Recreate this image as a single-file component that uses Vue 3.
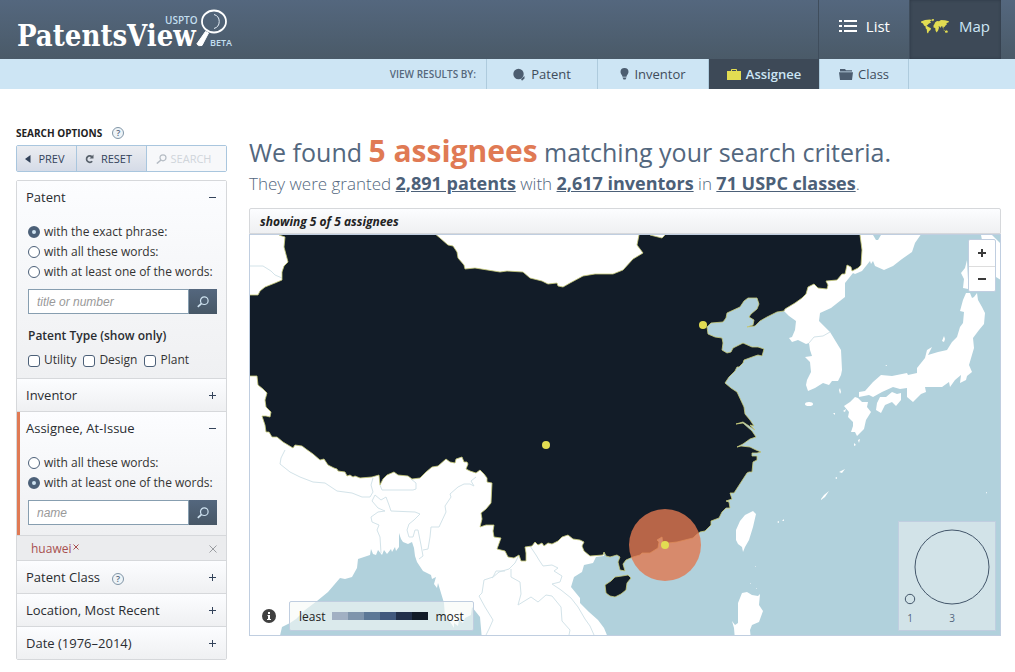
<script setup>
import { ref } from 'vue'

const tabs = [
  { id: 'patent', label: 'Patent' },
  { id: 'inventor', label: 'Inventor' },
  { id: 'assignee', label: 'Assignee' },
  { id: 'class', label: 'Class' }
]
const activeTab = ref('assignee')
const patentMatch = ref('exact')
const assigneeMatch = ref('any')
const patentTypes = ['Utility', 'Design', 'Plant']
const closedSections = [
  { label: 'Patent Class', help: true },
  { label: 'Location, Most Recent', help: false },
  { label: 'Date (1976–2014)', help: false }
]
const shades = ['s1', 's2', 's3', 's4', 's5', 's6']
</script>

<template>
  <div class="page">
    <header class="top">
      <a href="#" class="logo" aria-label="PatentsView">
        <span class="logo-name">PatentsView</span>
        <span class="logo-uspto">USPTO</span>
        <svg class="logo-glass" viewBox="0 0 32 38" aria-hidden="true">
          <ellipse cx="18" cy="12.5" rx="12" ry="11" fill="none" stroke="#fff" stroke-width="1.8" />
          <path d="M18 5.500a7.300 7.300 0 0 1 0 14" fill="none" stroke="#e4edf5" stroke-width="1" />
          <path d="M9.500 22.500 12.500 24 6 36.500Q2 37.500.8 35Z" fill="#fff" stroke="#fff" stroke-width="1" />
        </svg>
        <span class="logo-beta">BETA</span>
      </a>
      <nav class="modes">
        <a href="#" class="mode">
          <svg width="18" height="14" viewBox="0 0 18 14" aria-hidden="true">
            <path d="M0 1h3v2H0zM0 6h3v2H0zM0 11h3v2H0zM5 1h13v2H5zM5 6h13v2H5zM5 11h13v2H5z" fill="#fff" />
          </svg>
          List
        </a>
        <a href="#" class="mode mode-on">
          <svg width="28" height="15" viewBox="0 0 28 15" fill="#e2dc52" aria-hidden="true">
            <path d="M0 2.500 4 1l5-.6 2 .8-2 1.300 1 1.200-2 .8L6.500 6l-1 .8 2 1.200 2.500 1.200-.5 1.800-1.600 1.200L7 14.500l-1-1-.2-3L4.500 9l.3-1.200L3 6.500 2 4.500 0 3.500Z" />
            <path d="M10.500.300 13 0l-.5 2-1 .3Z" />
            <path d="M13.500 5 14 3.500 16 2l2 .3L20 1l4 .2 4 1-.6 1.300-1.900.5.3 1.500-1.300 1-1 1.500-1-.3.2 2-1-1-.4-1.500-1.300.3-.5 1.500-.9-1.500-1.100-.2.5 1.500-1 3-1.500 1.700-1-2-.3-2.500-1.700-.5L12.500 6.500Z" />
            <path d="m22.500 10.500 1.500 1-1 .3ZM24 12l2-.8 1 1.800-1 .8-2-.4Z" />
          </svg>
          Map
        </a>
      </nav>
    </header>

    <nav class="tabs">
      <span class="tabs-label">VIEW RESULTS BY:</span>
      <a
        v-for="t in tabs"
        :key="t.id"
        href="#"
        class="tab"
        :class="[`tab-${t.id}`, { on: activeTab === t.id }]"
        @click.prevent="activeTab = t.id"
      >
        <svg v-if="t.id === 'patent'" width="13" height="13" viewBox="0 0 13 13" aria-hidden="true">
          <circle cx="5.500" cy="6" r="5.200" fill="#4c5d70" />
          <path d="m8 11 3.500-3v2.500L9 12.800Z" fill="#4c5d70" />
        </svg>
        <svg v-else-if="t.id === 'inventor'" width="9" height="12" viewBox="0 0 9 12" fill="#4c5d70" aria-hidden="true">
          <path d="M4.500 0a4 4 0 0 1 4 4c0 2-1.800 2.800-2 4.800h-4C2.300 6.800.5 6 .5 4a4 4 0 0 1 4-4ZM2.500 9.500h4L5.500 11.500h-2Z" />
        </svg>
        <svg v-else-if="t.id === 'assignee'" width="14" height="11" viewBox="0 0 14 11" aria-hidden="true">
          <path d="M0 2h4V.500Q4 0 5 0h4q1 0 1 .5V2h4v9H0ZM5 2h4V1H5Z" fill="#e2dc52" />
        </svg>
        <svg v-else width="14" height="11" viewBox="0 0 14 11" fill="#4c5d70" aria-hidden="true">
          <path d="M1 0h5l1 1.200h6V2.500H1ZM0 3.200h14L13 11H1Z" />
        </svg>
        {{ t.label }}
      </a>
    </nav>

    <div class="body">
      <aside class="side">
        <h2 class="side-title">SEARCH OPTIONS <button class="help" aria-label="Search help">?</button></h2>
        <div class="actions">
          <button class="action prev">
            <svg width="6" height="8" viewBox="0 0 6 8" aria-hidden="true"><path d="M5.500 0v8L0 4Z" fill="#33435a" /></svg>
            PREV
          </button>
          <button class="action reset">
            <svg width="9" height="10" viewBox="0 0 9 10" aria-hidden="true">
              <path d="M7 2.800A3.200 3.200 0 1 0 7.200 7.200" fill="none" stroke="#58616b" stroke-width="1.700" />
              <path d="M8.500.500v4h-4Z" fill="#58616b" />
            </svg>
            RESET
          </button>
          <button class="action search" disabled>
            <svg width="11" height="10" viewBox="0 0 11 10" fill="none" stroke="#b5bcc4" stroke-width="1.200" aria-hidden="true">
              <circle cx="7" cy="3.800" r="3" /><path d="M5 6 .8 9.500" stroke-width="1.600" />
            </svg>
            SEARCH
          </button>
        </div>

        <div class="panel">
          <section class="block">
            <button class="head" aria-expanded="true">Patent <i class="minus"></i></button>
            <div class="fields">
              <label class="row"><input v-model="patentMatch" type="radio" name="pm" value="exact" />with the exact phrase:</label>
              <label class="row"><input v-model="patentMatch" type="radio" name="pm" value="all" />with all these words:</label>
              <label class="row"><input v-model="patentMatch" type="radio" name="pm" value="any" />with at least one of the words:</label>
              <form class="find" @submit.prevent>
                <input type="text" placeholder="title or number" aria-label="Patent title or number" />
                <button aria-label="Add patent term">
                  <svg width="12" height="12" viewBox="0 0 12 12" fill="none" stroke="#cfe3f1" stroke-width="1.200" aria-hidden="true">
                    <circle cx="7.300" cy="4.700" r="3.800" /><path d="M4.600 7.400.8 10.800" stroke-width="1.700" />
                  </svg>
                </button>
              </form>
              <fieldset class="types">
                <legend>Patent Type (show only)</legend>
                <div class="checks">
                  <label v-for="p in patentTypes" :key="p"><input type="checkbox" />{{ p }}</label>
                </div>
              </fieldset>
            </div>
          </section>

          <section class="block">
            <button class="head" aria-expanded="false">Inventor <i class="plus"></i></button>
          </section>

          <section class="block current">
            <button class="head" aria-expanded="true">Assignee, At-Issue <i class="minus"></i></button>
            <div class="fields">
              <label class="row"><input v-model="assigneeMatch" type="radio" name="am" value="all" />with all these words:</label>
              <label class="row"><input v-model="assigneeMatch" type="radio" name="am" value="any" />with at least one of the words:</label>
              <form class="find" @submit.prevent>
                <input type="text" placeholder="name" aria-label="Assignee name" />
                <button aria-label="Add assignee term">
                  <svg width="12" height="12" viewBox="0 0 12 12" fill="none" stroke="#cfe3f1" stroke-width="1.200" aria-hidden="true">
                    <circle cx="7.300" cy="4.700" r="3.800" /><path d="M4.600 7.400.8 10.800" stroke-width="1.700" />
                  </svg>
                </button>
              </form>
            </div>
          </section>

          <div class="terms">
            <button class="term">
              huawei<svg width="6" height="6" viewBox="0 0 6 6" aria-hidden="true"><path d="m.5.500 5 5m0-5-5 5" stroke="#a8504f" /></svg>
            </button>
            <button class="clear" aria-label="Clear all terms">
              <svg width="8" height="8" viewBox="0 0 8 8" aria-hidden="true"><path d="m.5.500 7 7m0-7-7 7" stroke="#9a9da1" /></svg>
            </button>
          </div>

          <section v-for="s in closedSections" :key="s.label" class="block">
            <button class="head" aria-expanded="false">
              <span>{{ s.label }}<span v-if="s.help" class="help">?</span></span> <i class="plus"></i>
            </button>
          </section>
        </div>
      </aside>

      <main class="main">
        <h1>We found <strong>5 assignees</strong> matching your search criteria.</h1>
        <p class="sub">
          They were granted <a href="#">2,891 patents</a> with <a href="#">2,617 inventors</a> in
          <a href="#">71 USPC classes</a>.
        </p>
        <div class="showing">showing 5 of 5 assignees</div>
        <div class="map">
          <svg class="geo" viewBox="250 235 750 400" preserveAspectRatio="xMidYMid slice" role="img" aria-label="Map of assignee locations">
            <g fill="#fff">
              <path d="M240 225H700V290L600 540 604 556 596 557 593 563 584 565 582 572 574 577 571 587 580 598 580 603 589 612 598 620 604 628 609 640H482L480 617 472 607 471 615 465 618 463 623 459 620 458 626 454 623 454 628 449 620 445 618 444 603 438 583 437 588 434 584 436 577 432 579 431 575 427 573 423 571 417 562 415 556 414 548 412 542 408 544 403 542 401 539 399 533 399 547 396 551 395 547 392 552 391 549 387 554 384 550 382 555 378 550 376 555 373 554 371 549 370 555 358 559 357 568 352 577 345 579 340 578 334 585 328 592 317 601 305 610 296 619 290 623 282 627 279 640H240Z" />
              <path d="M784 311 789 316 796 321 795 330 792 337 789 338 792 342 798 340 806 344 809 343 810 350 812 356 805 357 810 362 811 372 807 380 806 385 808 391 815 388 823 383 829 385 832 381 838 381 841 375 842 370 841 350 830 332 819 321 820 313 831 308 845 297 845 283 853 273 855 274 862 271 870 261 871 264 873 261 875 266 884 270 893 266 902 259 912 252 915 243 924 230H850L845 250 800 290Z" />
              <path d="M966 293 970 293 972 298 974 297 977 293 978 300 982 307 985 313 984 324 979 330 973 338 974 348 969 365 972 372 967 376 966 380 960 383 961 375 955 380 950 387 949 382 942 387 925 387 926 392 921 394 913 402 907 397 907 388 900 389 893 387 882 392 873 397 869 395 859 397 859 392 865 391 873 382 881 375 892 376 907 373 908 375 917 373 917 368 925 358 927 350 932 347 928 355 938 352 947 350 952 342 957 337 960 327 963 323 964 312 960 311 963 300Z" />
              <path d="M967 260 965 268 961 273 964 279 963 288 968 289 975 280H968ZM981 235H992L1001 244V280L996 277 992 240H982Z" />
              <path d="M855 397 858 398 862 402 868 402 867 407 871 412 866 420 864 429 857 436 855 432 851 432 853 426 853 422 848 417 849 412 844 406 850 402ZM892 392 897 394 901 393 901 400 896 406 892 402 885 405 881 413 876 410 877 403 880 397 886 397Z" />
              <path d="M753 511 756 514 753 527 749 540 745 547 743 552 742 547 738 544 736 540 736 530 740 521 745 515Z" />
              <path d="M742 593 747 592 752 595 758 596 760 594 759 605 763 611 759 622 752 625 750 630 751 640H735L734 628 732 621 735 625 738 623 738 603Z" />
              <ellipse cx="809" cy="404" rx="4" ry="2" />
              <path d="m944 336 1 3-1 3-2-1ZM840 388l1 4-1 2-1-4ZM843 411l3-2-1 3ZM833 413h2v2ZM854 443l2 2-2 1ZM858 440l2-1-1 4ZM839 472l6-3-3 4ZM835 478l2-1v2ZM821 499l3-4 5-4-4 6-4 3ZM777 522l2-1v2ZM782 521l2-2v2ZM755 566h1v1ZM750 583h1v1ZM756 588h1v1ZM885 365h2v1ZM986 492h1v2Z" />
            </g>
            <path d="M873 235h8l-3 5h-2Z" fill="#b1d1dc" />
            <g class="borders">
              <path d="M250 266H263L271 271 275 275 282 278M285 450 281 458 280 464 290 472 300 477 313 482 325 483 337 491 352 493 362 497 370 497 373 492 371 485 373 478M380 485 382 490H413L416 489 416 483 411 479M375 495 372 501 378 508 385 511 378 512 371 517 372 522 379 525 377 530 380 537 381 553M375 495 381 500 386 497 389 505 391 511 415 512 420 514 414 520 409 524 407 530 409 537 413 537 415 530 418 530 421 545 423 556 419 559M423 550 428 549 430 537 431 527 439 527 446 512 445 506 451 497 450 494 458 487 464 484 470 484 474 486 471 481 476 477M505 571 496 571 493 577 484 580 482 593 479 596 485 607 493 620 489 629 486 635" />
              <path d="M519 555 515 563 509 569 499 572 492 578M511 569 511 577 520 582 521 594 518 605 531 597 538 602 546 595 552 596 561 607 562 621 570 630 569 635M530 546 536 555 539 560 543 566 552 565 558 568 554 571 562 576 560 582 552 584 561 590 571 598 578 607 585 619 590 626 594 635M809 343 814 337 823 336 830 332" />
            </g>
            <g class="china">
              <path d="M279 228V235L285 237 284 247 288 262 284 266 282 272 282 280 275 283 265 287 260 291 258 295H240V376L257 376 258 385 263 389 267 393 265 400 266 407 271 412 270 417 266 416 262 416 265 425 266 432 269 432 272 437 277 437 283 442 288 445 293 448 295 445 302 446 306 449 313 454 320 460 324 459 328 465 334 468 337 469 338 471 345 472 347 476 350 475 353 477 355 476 360 478 372 477 379 475 380 485 383 479 387 475 394 472 398 475 408 476 412 479 420 478 426 472 432 467 438 466 446 459 450 462 455 463 456 459 462 457 464 462 467 462 468 464 466 469 470 471 476 473 480 470 484 474 487 478 487 482 492 483 491 503 486 509 481 513 482 519 480 527 486 525 494 525 493 531 494 537 501 538 497 549 505 551 508 557 514 558 519 555 521 561 526 561 526 553 525 547 532 546 535 542 538 545 542 543 544 546 548 543 552 544 558 541 562 537 568 535 573 539 580 540 584 542 582 546 584 551 590 556 603 555 604 552 606 556 610 557 617 555 620 557 618 562 620 570 625 571 623 564 626 560 633 557 640 555 642 553 650 553 658 548 659 542 657 540 662 537 663 545 668 543 677 542 693 538 696 535 700 532 705 531 711 525 711 521 719 518 722 512 726 508 730 508 729 502 726 501 732 499 730 493 734 493 747 473 749 472 752 472 753 462 757 460 757 456 752 456 752 453 757 453 761 452 756 450 750 447 741 446 737 447 743 444 750 439 756 437 752 431 743 423 736 424 743 422 755 430 750 425 754 426 750 420 745 414 744 407 737 392 731 388 725 383 729 377 735 371 737 367 739 367 743 363 744 360 755 356 758 355 762 356 764 349 758 347 752 347 743 343 733 348 731 352 727 353 722 350 723 343 722 338 715 337 708 334 707 327 711 323 723 322 726 318 727 313 740 307 744 301 748 298 757 298 759 304 757 309 751 314 749 317 754 320 753 325 747 327 755 326 760 321 767 317 777 312 784 311 785 309 795 303 802 298 806 294 808 287 814 284 818 288 827 289 828 285 826 281 837 280 842 274 845 274 847 265 851 267 852 271 858 268 861 265 862 250 860 235V228H668L665 235 662 238 650 235 646 228H639V235L637 245 643 253 633 259 623 270 613 274 595 274 583 276 570 283 563 287 558 286 557 283 548 284 542 281 530 278 523 272 507 271 500 272 475 268 465 269 464 265 458 258 457 252 453 246 448 245 440 238 434 233V228Z" />
              <path d="M615 577 622 576 628 575 631 578 627 583 626 590 621 594 615 597 610 596 606 593 605 585 611 581Z" />
            </g>
            <circle cx="665" cy="545" r="36" fill="#e17850" fill-opacity=".8" />
            <g fill="#e2dc52">
              <circle cx="665" cy="545" r="4" /><circle cx="703" cy="325" r="4" /><circle cx="546" cy="445" r="4" />
            </g>
          </svg>

          <div class="zoom">
            <button aria-label="Zoom in"><svg width="8" height="8" viewBox="0 0 8 8" aria-hidden="true"><path d="M3 0h2v3h3v2H5v3H3V5H0V3h3Z" fill="#3a3a3a" /></svg></button>
            <button aria-label="Zoom out"><svg width="8" height="8" viewBox="0 0 8 8" aria-hidden="true"><path d="M0 3h8v2H0Z" fill="#3a3a3a" /></svg></button>
          </div>

          <div class="scale">
            <button class="info" aria-label="Map information">
              <svg width="14" height="14" viewBox="0 0 14 14" aria-hidden="true">
                <circle cx="7" cy="7" r="7" fill="#404040" />
                <path d="M6 3h2v2H6ZM5.500 6H8v4h1v1H5v-1h1V7h-.5Z" fill="#fff" />
              </svg>
            </button>
            <div class="ramp">
              <span>least</span>
              <div class="shades"><i v-for="s in shades" :key="s" :class="s"></i></div>
              <span>most</span>
            </div>
          </div>

          <div class="sizes">
            <svg width="76" height="76" viewBox="0 0 76 76" class="big" aria-hidden="true"><circle cx="38" cy="38" r="37" /></svg>
            <svg width="12" height="12" viewBox="0 0 12 12" class="small" aria-hidden="true"><circle cx="6" cy="6" r="4.700" /></svg>
            <span class="n1">1</span><span class="n3">3</span>
          </div>
        </div>
      </main>
    </div>
  </div>
</template>

<style>
body {
  background: #fff;
}
</style>

<style scoped>
.page {
  font-family: "Open Sans", sans-serif;
  color: #333;
  font-size: 12px;
}
.page * {
  box-sizing: border-box;
}
a {
  text-decoration: none;
}
button {
  font-family: inherit;
  margin: 0;
  padding: 0;
  border: 0;
  background: none;
  cursor: pointer;
}
.top {
  display: flex;
  justify-content: space-between;
  height: 59px;
  padding: 0 14px 0 17px;
  background: linear-gradient(#54677e, #4a5a68);
}
.logo {
  position: relative;
  width: 220px;
  color: #fff;
}
.logo-name {
  display: block;
  margin-top: 24px;
  font: bold 29px/24px "DejaVu Serif Condensed", "DejaVu Serif", serif;
}
.logo-uspto,
.logo-beta {
  position: absolute;
  color: #c3dff0;
  font-weight: 600;
}
.logo-uspto {
  left: 148px;
  top: 13px;
  font-size: 10px;
  line-height: 14px;
}
.logo-beta {
  left: 193px;
  top: 37px;
  font-size: 9px;
  line-height: 12px;
}
.logo-glass {
  position: absolute;
  left: 179px;
  top: 9px;
  width: 32px;
  height: 38px;
}
.modes {
  display: flex;
}
.mode {
  display: flex;
  align-items: center;
  gap: 9px;
  height: 59px;
  padding: 0 19px 7px 20px;
  border-left: 1px solid #3f4d5c;
  color: #fff;
  font-size: 15px;
}
.mode-on {
  gap: 10px;
  padding: 0 11px 7px;
  background: #3d4957;
  color: #cde6f5;
  box-shadow: inset 0 0 3px #2c3744;
}
.tabs {
  display: flex;
  justify-content: flex-end;
  height: 30px;
  padding-right: 106px;
  background: #cde5f4;
}
.tabs-label {
  margin-right: 10px;
  color: #56687c;
  font-size: 10px;
  font-weight: 600;
  line-height: 30px;
}
.tab {
  display: flex;
  align-items: center;
  justify-content: center;
  gap: 5px;
  width: 111px;
  border-left: 1px solid #aecbdd;
  color: #3f4c5b;
  font-size: 13px;
  font-weight: 500;
}
.tab-class {
  width: 90px;
  border-right: 1px solid #aecbdd;
}
.tab.on {
  background: #3d4957;
  background-clip: padding-box;
  color: #cde6f5;
  font-weight: 600;
}
.body {
  display: flex;
  gap: 22px;
  padding: 36px 14px 12px 16px;
}
.side {
  flex: 0 0 211px;
  min-width: 0;
}
.side-title {
  display: flex;
  align-items: center;
  height: 16px;
  margin: 0;
  font-size: 10px;
  font-weight: 700;
  color: #222;
}
.help {
  display: inline-block;
  width: 12px;
  height: 12px;
  margin-left: 10px;
  border: 1px solid #8195a6;
  border-radius: 50%;
  background: #eef4f8;
  color: #56687c;
  font-size: 9px;
  line-height: 10px;
  font-weight: 600;
  text-align: center;
}
.head .help {
  margin-left: 12px;
}
.actions {
  display: flex;
  height: 27px;
  margin: 4px 0 8px;
  border: 1px solid #a9c6de;
  border-radius: 2px;
}
.action {
  display: flex;
  align-items: center;
  justify-content: center;
  gap: 7px;
  background: linear-gradient(#ebedf1, #d5dbe7);
  color: #33435a;
  font-size: 11px;
}
.prev {
  flex: 0 0 59px;
  padding-right: 3px;
}
.reset {
  flex: 0 0 70px;
  padding-right: 6px;
  border-left: 1px solid #a9c6de;
}
.search {
  flex: 1;
  min-width: 0;
  gap: 4px;
  padding-right: 6px;
  border-left: 1px solid #a9c6de;
  background: #f7f8fa;
  color: #d0d5da;
}
.panel {
  border: 1px solid #d6d8db;
  border-radius: 2px;
}
.block {
  border-bottom: 1px solid #d6d8db;
  background: linear-gradient(#fcfdff, #eff0f2);
}
.block:last-child {
  border-bottom: 0;
}
.current {
  position: relative;
}
.current::before {
  content: "";
  position: absolute;
  left: 0;
  top: 0;
  bottom: 0;
  width: 3px;
  background: #e07a54;
}
.head {
  display: flex;
  align-items: center;
  justify-content: space-between;
  width: 100%;
  height: 32px;
  padding: 0 10px 0 9px;
  color: #2a2d31;
  font-size: 13px;
  font-weight: 500;
}
.minus,
.plus {
  position: relative;
  width: 7px;
  height: 7px;
}
.minus::before,
.plus::before,
.plus::after {
  content: "";
  position: absolute;
  left: 0;
  top: 3px;
  width: 7px;
  height: 1px;
  background: #33435a;
}
.plus::after {
  left: 3px;
  top: 0;
  width: 1px;
  height: 7px;
}
.fields {
  padding: 8px 9px 10px 11px;
}
.row {
  display: flex;
  align-items: center;
  height: 20px;
  white-space: nowrap;
}
input[type="radio"],
input[type="checkbox"] {
  appearance: none;
  flex: none;
  width: 12px;
  height: 12px;
  margin: 2px 4px 0 0;
  border: 1px solid #4c6078;
  background: #fff;
}
input[type="radio"] {
  border-radius: 50%;
}
input[type="radio"]:checked {
  border: 4px solid #4c6078;
  background: #cfe3f1;
}
input[type="checkbox"] {
  border-radius: 3px;
}
.find {
  display: flex;
  height: 25px;
  margin-top: 8px;
}
.find input {
  flex: 1;
  width: 0;
  min-width: 0;
  height: 25px;
  padding: 0 8px;
  border: 1px solid #879eb0;
  background: #fff;
  font: italic 12px "Liberation Sans", sans-serif;
}
.find input::placeholder {
  color: #999;
}
.find button {
  display: flex;
  align-items: center;
  justify-content: center;
  flex: 0 0 28px;
  background: linear-gradient(#54677e, #475766);
}
.types {
  min-width: 0;
  margin: 12px 0 0;
  padding: 0;
  border: 0;
}
.types legend {
  padding: 0;
  color: #2a2d31;
  line-height: 20px;
  font-weight: 600;
}
.checks {
  display: flex;
  gap: 7px;
  margin-top: 5px;
  line-height: 17px;
}
.checks label {
  display: flex;
  align-items: center;
}
.terms {
  display: flex;
  align-items: center;
  justify-content: space-between;
  height: 25px;
  padding: 0 9px 0 14px;
  border-bottom: 1px solid #d6d8db;
  background: #ebecee;
}
.term {
  display: flex;
  gap: 2px;
  color: #a8504f;
  font-size: 12px;
}
.term svg {
  margin-top: 4px;
}
.clear {
  display: flex;
  padding-top: 2px;
}
.main {
  flex: 1;
  min-width: 0;
}
h1 {
  margin: 7px 0 0;
  color: #53677e;
  font-size: 25px;
  font-weight: 400;
  line-height: 38px;
}
h1 strong {
  color: #e07a54;
  font-size: 30px;
  line-height: 38px;
}
.sub {
  margin: 0;
  color: #53677e;
  font-size: 17px;
  font-weight: 300;
  line-height: 24px;
}
.sub a {
  color: #4c6078;
  font-size: 18px;
  font-weight: 700;
  text-decoration: underline;
}
.showing {
  height: 26px;
  margin-top: 12px;
  padding-left: 10px;
  border: 1px solid #d6d8db;
  border-radius: 2px 2px 0 0;
  background: linear-gradient(#fcfdff, #eff0f2);
  color: #222;
  font-size: 12px;
  font-style: italic;
  font-weight: 700;
  line-height: 26px;
}
.map {
  position: relative;
  border: 1px solid #c0cee0;
  background: #b1d1dc;
}
.geo {
  display: block;
  width: 100%;
  aspect-ratio: 15 / 8;
}
.borders {
  fill: none;
  stroke: #d3e3e9;
  stroke-width: 1;
}
.china {
  fill: #121c28;
  stroke: #c9cc78;
  stroke-width: 0.8;
  stroke-linejoin: round;
}
.zoom {
  position: absolute;
  right: 4px;
  top: 4px;
  width: 28px;
  border: 1px solid #c0cee0;
  border-radius: 2px;
  background: #fff;
}
.zoom button {
  display: flex;
  align-items: center;
  justify-content: center;
  width: 100%;
  height: 26px;
}
.zoom button + button {
  height: 25px;
  border-top: 1px solid #ddd;
}
.scale {
  position: absolute;
  left: 12px;
  bottom: 4px;
  display: flex;
  align-items: center;
  gap: 13px;
}
.info {
  display: flex;
}
.ramp {
  display: flex;
  align-items: center;
  gap: 7px;
  height: 30px;
  padding: 0 9px;
  border: 1px solid #c0cee0;
  border-radius: 2px;
  background: rgba(247, 250, 247, 0.6);
  color: #222;
}
.shades {
  display: flex;
}
.shades i {
  width: 16px;
  height: 8px;
}
.s1 { background: #a1b0c3; }
.s2 { background: #7f95ac; }
.s3 { background: #5c7896; }
.s4 { background: #41597d; }
.s5 { background: #22304a; }
.s6 { background: #121c28; }
.sizes {
  position: absolute;
  right: 4px;
  bottom: 4px;
  width: 98px;
  height: 110px;
  border: 1px solid #c0cee0;
  background: #d2e3e8;
}
.sizes circle {
  fill: none;
  stroke: #43566a;
  stroke-width: 1;
}
.sizes svg,
.sizes span {
  position: absolute;
}
.big {
  left: 15px;
  top: 7px;
}
.small {
  left: 5px;
  top: 71px;
}
.sizes span {
  top: 88px;
  width: 12px;
  color: #53677e;
  font-size: 10px;
  line-height: 16px;
  text-align: center;
}
.n1 {
  left: 5px;
}
.n3 {
  left: 47px;
}
</style>
